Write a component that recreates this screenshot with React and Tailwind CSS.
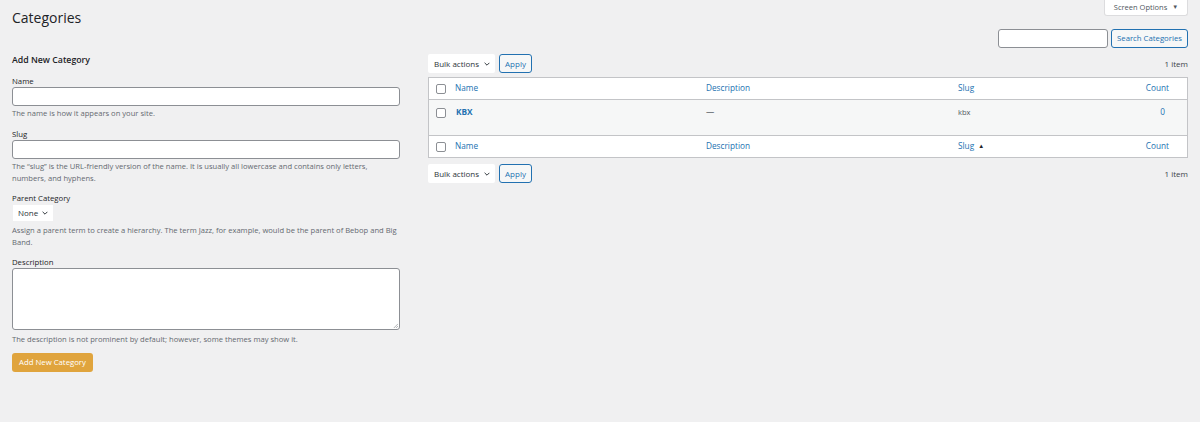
import React from "react";

const font = { fontFamily: "'Open Sans', 'Noto Sans', sans-serif" };

const Chevron = ({ className = "" }) => (
  <svg viewBox="0 0 10 6" className={className} fill="none" stroke="currentColor" strokeWidth="1.6">
    <path d="M1 1l4 4 4-4" />
  </svg>
);

const Checkbox = () => (
  <span className="inline-block w-[10px] h-[10px] rounded-[2px] border border-[#8c8f94] bg-white shrink-0" />
);

const BulkBar = ({ className = "" }) => (
  <div className={`flex items-center justify-between ${className}`}>
    <div className="flex items-center gap-[4px]">
      <div className="h-[19px] w-[67px] bg-white flex items-center pl-[6px] gap-[5px] text-[8px] text-[#2c3338] rounded-[2px]">
        Bulk actions
        <Chevron className="w-[6px] h-[4px] text-[#2c3338]" />
      </div>
      <button className="h-[19px] w-[33px] border border-[#2271b1] bg-[#f6f7f7] text-[#2271b1] text-[8px] rounded-[3px]">
        Apply
      </button>
    </div>
    <span className="text-[8px] text-[#3c434a]">1 item</span>
  </div>
);

const HeaderRow = ({ footer }) => (
  <div className={`flex items-center h-[22px] bg-white pl-[7px] pr-[18px] text-[8.25px] text-[#2271b1] ${footer ? "border-t border-[#c3c4c7]" : "border-b border-[#c3c4c7]"}`}>
    <Checkbox />
    <span className="ml-[9px] w-[251px]">Name</span>
    <span className="w-[252px]">Description</span>
    <span className="flex-1 flex items-center gap-[4px]">
      Slug
      {footer && <span className="text-[6px] text-[#1d2327]">▲</span>}
    </span>
    <span>Count</span>
  </div>
);

const Help = ({ children, className = "" }) => (
  <p className={`text-[7.6px] leading-[12px] text-[#646970] ${className}`}>{children}</p>
);

const Label = ({ children, className = "" }) => (
  <p className={`text-[7.75px] leading-[12px] text-[#1d2327] ${className}`}>{children}</p>
);

export default function App() {
  return (
    <div className="min-h-[422px] bg-[#f0f0f1] px-3" style={font}>
      <div className="flex justify-between h-[29px]">
        <h1 className="pt-[9px] text-[14px] leading-[18px] text-[#1d2327]">Categories</h1>
        <div className="h-[16px] w-[84px] bg-white border border-t-0 border-[#dcdcde] rounded-b-[3px] flex items-center justify-center gap-[5px] text-[7.5px] text-[#50575e]">
          Screen Options <span className="text-[6px]">▼</span>
        </div>
      </div>

      <div className="flex items-start gap-[28px]">
        {/* left form */}
        <div className="w-[388px]">
          <h2 className="mt-[24px] text-[8.75px] leading-[14px] font-semibold text-[#1d2327]">Add New Category</h2>

          <Label className="mt-[8px]">Name</Label>
          <div className="h-[19px] bg-white border border-[#8c8f94] rounded-[3px]" />
          <Help className="mt-[1px]">The name is how it appears on your site.</Help>

          <Label className="mt-[9px]">Slug</Label>
          <div className="h-[19px] bg-white border border-[#8c8f94] rounded-[3px]" />
          <Help className="mt-[1px]">
            The “slug” is the URL-friendly version of the name. It is usually all lowercase and contains only letters, numbers, and hyphens.
          </Help>

          <Label className="mt-[8px]">Parent Category</Label>
          <div className="mt-[1px] ml-[1px] h-[16px] w-[40px] bg-white flex items-center pl-[5px] gap-[4px] text-[8px] text-[#2c3338]">
            None
            <Chevron className="w-[6px] h-[4px] text-[#2c3338]" />
          </div>
          <Help className="mt-[3px]">
            Assign a parent term to create a hierarchy. The term Jazz, for example, would be the parent of Bebop and Big Band.
          </Help>

          <Label className="mt-[8px]">Description</Label>
          <div className="relative h-[62px] bg-white border border-[#8c8f94] rounded-[3px]">
            <svg viewBox="0 0 6 6" className="absolute right-[1px] bottom-[1px] w-[5px] h-[5px]" stroke="#8c8f94" strokeWidth="0.8">
              <path d="M1 6L6 1M3.5 6L6 3.5" />
            </svg>
          </div>
          <Help className="mt-[3px]">The description is not prominent by default; however, some themes may show it.</Help>

          <button className="mt-[8px] h-[19px] w-[81px] bg-[#e0a43d] rounded-[3px] text-white text-[7.75px]">
            Add New Category
          </button>
        </div>

        {/* right list */}
        <div className="flex-1">
          <div className="flex justify-end gap-[3px]">
            <div className="h-[19px] w-[110px] bg-white border border-[#8c8f94] rounded-[3px]" />
            <button className="h-[19px] w-[77px] border border-[#2271b1] bg-[#f6f7f7] text-[#2271b1] text-[7.75px] rounded-[3px]">
              Search Categories
            </button>
          </div>

          <BulkBar className="mt-[6px]" />

          <div className="mt-[4px] border border-[#c3c4c7]">
            <HeaderRow />
            <div className="h-[35px] bg-[#f6f7f7] flex items-start pl-[7px] pr-[22px] pt-[6px] text-[8.25px]">
              <span className="mt-[2px]"><Checkbox /></span>
              <span className="ml-[10px] w-[250px] font-bold text-[#2271b1]">KBX</span>
              <span className="w-[252px] text-[#50575e]">—</span>
              <span className="flex-1 text-[7.5px] text-[#50575e] pt-[1px]">kbx</span>
              <span className="text-[#2271b1]">0</span>
            </div>
            <HeaderRow footer />
          </div>

          <BulkBar className="mt-[6px]" />
        </div>
      </div>
    </div>
  );
}
